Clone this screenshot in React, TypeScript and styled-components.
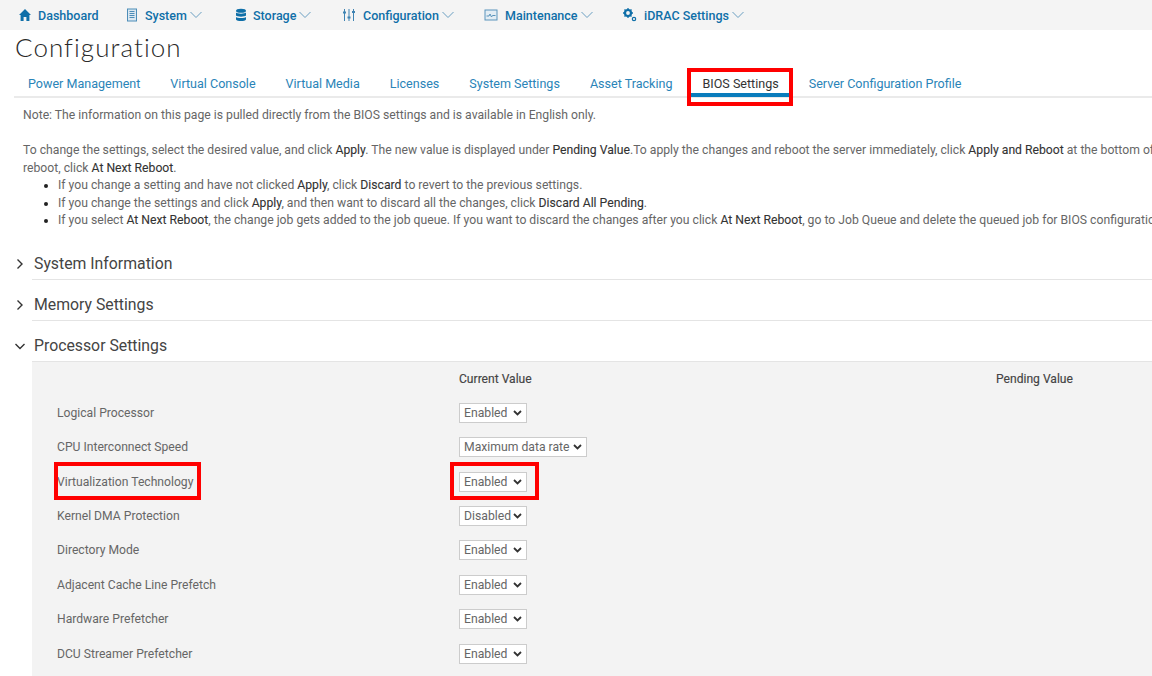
import React from "react";
import styled, { createGlobalStyle } from "styled-components";

const Global = createGlobalStyle`
  html, body { margin: 0; padding: 0; background: #fff; }
  body { font-family: Roboto, "Liberation Sans", sans-serif; color: #444; }
`;

const Page = styled.div`
  position: relative;
  width: 1152px;
  height: 676px;
  overflow: hidden;
  background: #fff;
`;

const NavBar = styled.nav`
  display: flex;
  align-items: center;
  height: 30px;
  background: #f4f4f4;
  padding-left: 18px;
`;

const NavItem = styled.div<{ $w: number }>`
  display: flex;
  align-items: center;
  width: ${(p) => p.$w}px;
  flex: none;
  color: #0f6fa8;
  font-size: 12.5px;
  font-weight: 500;
  white-space: nowrap;
`;

const NavIcon = styled.svg<{ $gap: number }>`
  width: 14px;
  height: 14px;
  flex: none;
  margin-right: ${(p) => p.$gap}px;
`;

const NavChevron = styled.svg`
  width: 14px;
  height: 8px;
  flex: none;
  margin-left: 2px;
`;

const Title = styled.h1`
  margin: 1px 0 0 15px;
  height: 35px;
  line-height: 32px;
  font-family: Lato, sans-serif;
  font-size: 26px;
  font-weight: 300;
  letter-spacing: 1.05px;
  color: #2a2a2a;
`;

const Tabs = styled.div`
  display: flex;
  align-items: flex-start;
  height: 32px;
  margin-left: 14px;
  padding-left: 14px;
  gap: 30px;
  border-bottom: 2px solid #eaeaea;
  box-sizing: border-box;
`;

const Tab = styled.div<{ $active?: boolean }>`
  font-size: 12.55px;
  line-height: 15px;
  margin-top: 10px;
  height: 21px;
  white-space: nowrap;
  color: ${(p) => (p.$active ? "#333" : "#2a84b8")};
  position: relative;
  &::after {
    content: "";
    display: ${(p) => (p.$active ? "block" : "none")};
    position: absolute;
    left: -11px;
    right: -11px;
    bottom: 0;
    height: 4px;
    background: #0a7cbc;
  }
`;

const Notes = styled.div`
  margin: 9px 0 0 23px;
  font-size: 12.2px;
  line-height: 17.5px;
  color: #666;
  white-space: nowrap;
`;

const Para = styled.p`
  margin: 0 0 17.5px;
`;

const Strong = styled.span`
  color: #333;
  -webkit-text-stroke: 0.1px #333;
`;

const Bullets = styled.ul`
  margin: -17.5px 0 0;
  padding-left: 35px;
  & li::marker { color: #222; font-size: 12px; }
`;

const Section = styled.div<{ $h: number; $mt?: number }>`
  display: flex;
  align-items: flex-end;
  height: ${(p) => p.$h}px;
  margin-top: ${(p) => p.$mt ?? 0}px;
  box-sizing: border-box;
`;

const Chevron = styled.svg`
  width: 12px;
  height: 12px;
  margin-left: 14px;
  margin-right: 6px;
  margin-bottom: 10px;
  flex: none;
`;

const SectionTitle = styled.div`
  flex: 1;
  height: 32px;
  line-height: 31px;
  padding-left: 2px;
  box-sizing: border-box;
  font-size: 15.8px;
  color: #444;
  border-bottom: 1px solid #e4e4e4;
`;

const Panel = styled.div`
  margin-left: 32px;
  background: #f3f3f3;
  height: 320px;
  padding: 1px 0 0 25px;
`;

const HeaderRow = styled.div`
  display: grid;
  grid-template-columns: 402px 537px auto;
  height: 33px;
  align-items: center;
  font-size: 12.1px;
  color: #444;
  & > span { -webkit-text-stroke: 0.15px #444; }
`;

const Row = styled.div`
  display: grid;
  grid-template-columns: 402px auto;
  height: 34.45px;
  align-items: center;
  font-size: 12.15px;
  color: #666;
`;

const SelectBox = styled.div<{ $w: number }>`
  position: relative;
  justify-self: start;
  width: ${(p) => p.$w}px;
  height: 20px;
`;

const Select = styled.select`
  display: block;
  width: 100%;
  height: 100%;
  box-sizing: border-box;
  appearance: none;
  padding: 0 0 0 4px;
  font-family: Roboto, sans-serif;
  font-size: 12.2px;
  color: #666;
  background: #fff;
  border: 1px solid #ccc;
  border-radius: 0;
  outline: none;
`;

const SelectArrow = styled.svg`
  position: absolute;
  right: 5px;
  top: 7px;
  width: 9px;
  height: 6px;
  pointer-events: none;
`;

const Highlight = styled.div<{ $x: number; $y: number; $w: number; $h: number }>`
  position: absolute;
  left: ${(p) => p.$x}px;
  top: ${(p) => p.$y}px;
  width: ${(p) => p.$w}px;
  height: ${(p) => p.$h}px;
  box-sizing: border-box;
  border: 4px solid #f00;
  pointer-events: none;
`;

const Down = () => (
  <NavChevron viewBox="0 0 14 8" fill="none" stroke="#6a9fc2" strokeWidth="1">
    <path d="M1.5 1 L7 6.5 L12.5 1" />
  </NavChevron>
);

const rows: [string, string[], number][] = [
  ["Logical Processor", ["Enabled", "Disabled"], 68],
  ["CPU Interconnect Speed", ["Maximum data rate"], 128],
  ["Virtualization Technology", ["Enabled", "Disabled"], 68],
  ["Kernel DMA Protection", ["Disabled", "Enabled"], 68],
  ["Directory Mode", ["Enabled", "Disabled"], 68],
  ["Adjacent Cache Line Prefetch", ["Enabled", "Disabled"], 68],
  ["Hardware Prefetcher", ["Enabled", "Disabled"], 68],
  ["DCU Streamer Prefetcher", ["Enabled", "Disabled"], 68],
];

export default function App() {
  return (
    <Page>
      <Global />
      <NavBar>
        <NavItem $w={107}>
          <NavIcon $gap={6} viewBox="0 0 14 14" fill="#0f6fa8">
            <path d="M7 1 L1 7 L2.6 7 L2.6 13 L5.6 13 L5.6 9 L8.4 9 L8.4 13 L11.4 13 L11.4 7 L13 7 Z" />
          </NavIcon>
          Dashboard
        </NavItem>
        <NavItem $w={109}>
          <NavIcon $gap={6} viewBox="0 0 14 14" fill="none" stroke="#4d8db8" strokeWidth="1">
            <rect x="2.5" y="1" width="9" height="12" fill="#dbe8f1" />
            <path d="M4.5 3.5h5M4.5 5.5h5M4.5 7.5h5M4.5 9.5h5" />
          </NavIcon>
          System
          <Down />
        </NavItem>
        <NavItem $w={108}>
          <NavIcon $gap={5} viewBox="0 0 14 14" fill="#0f6fa8">
            <ellipse cx="7" cy="2.8" rx="5" ry="2" />
            <path d="M2 4.6c1 1.4 9 1.4 10 0v3c-1 1.4-9 1.4-10 0zM2 9c1 1.4 9 1.4 10 0v2.4c-1 2-9 2-10 0z" />
          </NavIcon>
          Storage
          <Down />
        </NavItem>
        <NavItem $w={142}>
          <NavIcon $gap={7} viewBox="0 0 14 14" fill="none" stroke="#3f83b2" strokeWidth="1">
            <path d="M2.5 1v12M7 1v12M11.5 1v12" />
            <path d="M1 4.5h3M5.5 9.5h3M10 4h3" strokeWidth="2" />
          </NavIcon>
          Configuration
          <Down />
        </NavItem>
        <NavItem $w={139}>
          <NavIcon $gap={7} viewBox="0 0 14 14" fill="none" stroke="#5a94bb" strokeWidth="1">
            <rect x="1" y="2" width="12" height="10" fill="#e3edf4" />
            <path d="M2.5 8h2.5l1-2 1.5 3 1-1.5h3" />
          </NavIcon>
          Maintenance
          <Down />
        </NavItem>
        <NavItem $w={140}>
          <NavIcon $gap={7} viewBox="0 0 14 14" fill="#0f6fa8">
            <circle cx="5" cy="5" r="3" fill="none" stroke="#0f6fa8" strokeWidth="2.2" />
            <path d="M5 0v2M5 8v2M0 5h2M8 5h2M1.5 1.5l1.4 1.4M7.1 7.1l1.4 1.4M1.5 8.5l1.4-1.4M7.1 2.9l1.4-1.4" stroke="#0f6fa8" strokeWidth="1.3" />
            <circle cx="11" cy="11" r="1.7" fill="none" stroke="#0f6fa8" strokeWidth="1.2" />
          </NavIcon>
          iDRAC Settings
          <Down />
        </NavItem>
      </NavBar>

      <Title>Configuration</Title>

      <Tabs>
        <Tab>Power Management</Tab>
        <Tab>Virtual Console</Tab>
        <Tab>Virtual Media</Tab>
        <Tab>Licenses</Tab>
        <Tab>System Settings</Tab>
        <Tab>Asset Tracking</Tab>
        <Tab $active>BIOS Settings</Tab>
        <Tab>Server Configuration Profile</Tab>
      </Tabs>

      <Notes>
        <Para>Note: The information on this page is pulled directly from the BIOS settings and is available in English only.</Para>
        <Para>
          To change the settings, select the desired value, and click <Strong>Apply</Strong>. The new value is displayed under{" "}
          <Strong>Pending Value</Strong>.To apply the changes and reboot the server immediately, click{" "}
          <Strong>Apply and Reboot</Strong> at the bottom of the page. To apply the changes at next
          <br />
          reboot, click <Strong>At Next Reboot</Strong>.
        </Para>
        <Bullets>
          <li>If you change a setting and have not clicked <Strong>Apply</Strong>, click <Strong>Discard</Strong> to revert to the previous settings.</li>
          <li>If you change the settings and click <Strong>Apply</Strong>, and then want to discard all the changes, click <Strong>Discard All Pending</Strong>.</li>
          <li>If you select <Strong>At Next Reboot</Strong>, the change job gets added to the job queue. If you want to discard the changes after you click <Strong>At Next Reboot</Strong>, go to Job Queue and delete the queued job for BIOS configuration.</li>
        </Bullets>
      </Notes>

      <Section $h={40} $mt={10}>
        <Chevron viewBox="0 0 12 12" fill="none" stroke="#333" strokeWidth="1.4"><path d="M3.5 1.5 L8 6 L3.5 10.5" /></Chevron>
        <SectionTitle>System Information</SectionTitle>
      </Section>
      <Section $h={41}>
        <Chevron viewBox="0 0 12 12" fill="none" stroke="#333" strokeWidth="1.4"><path d="M3.5 1.5 L8 6 L3.5 10.5" /></Chevron>
        <SectionTitle>Memory Settings</SectionTitle>
      </Section>
      <Section $h={41}>
        <Chevron viewBox="0 0 12 12" fill="none" stroke="#333" strokeWidth="1.4"><path d="M1.5 4 L6 8.5 L10.5 4" /></Chevron>
        <SectionTitle>Processor Settings</SectionTitle>
      </Section>

      <Panel>
        <HeaderRow>
          <div />
          <span>Current Value</span>
          <span>Pending Value</span>
        </HeaderRow>
        {rows.map(([label, options, width]) => (
          <Row key={label}>
            <div>{label}</div>
            <SelectBox $w={width}>
              <Select defaultValue={options[0]}>
                {options.map((o) => (
                  <option key={o}>{o}</option>
                ))}
              </Select>
              <SelectArrow viewBox="0 0 9 6" fill="none" stroke="#333" strokeWidth="1.8">
                <path d="M1 1 L4.5 4.5 L8 1" />
              </SelectArrow>
            </SelectBox>
          </Row>
        ))}
      </Panel>

      <Highlight $x={687} $y={68} $w={106} $h={38} />
      <Highlight $x={54} $y={462} $w={147} $h={38} />
      <Highlight $x={450} $y={462} $w={89} $h={38} />
    </Page>
  );
}
